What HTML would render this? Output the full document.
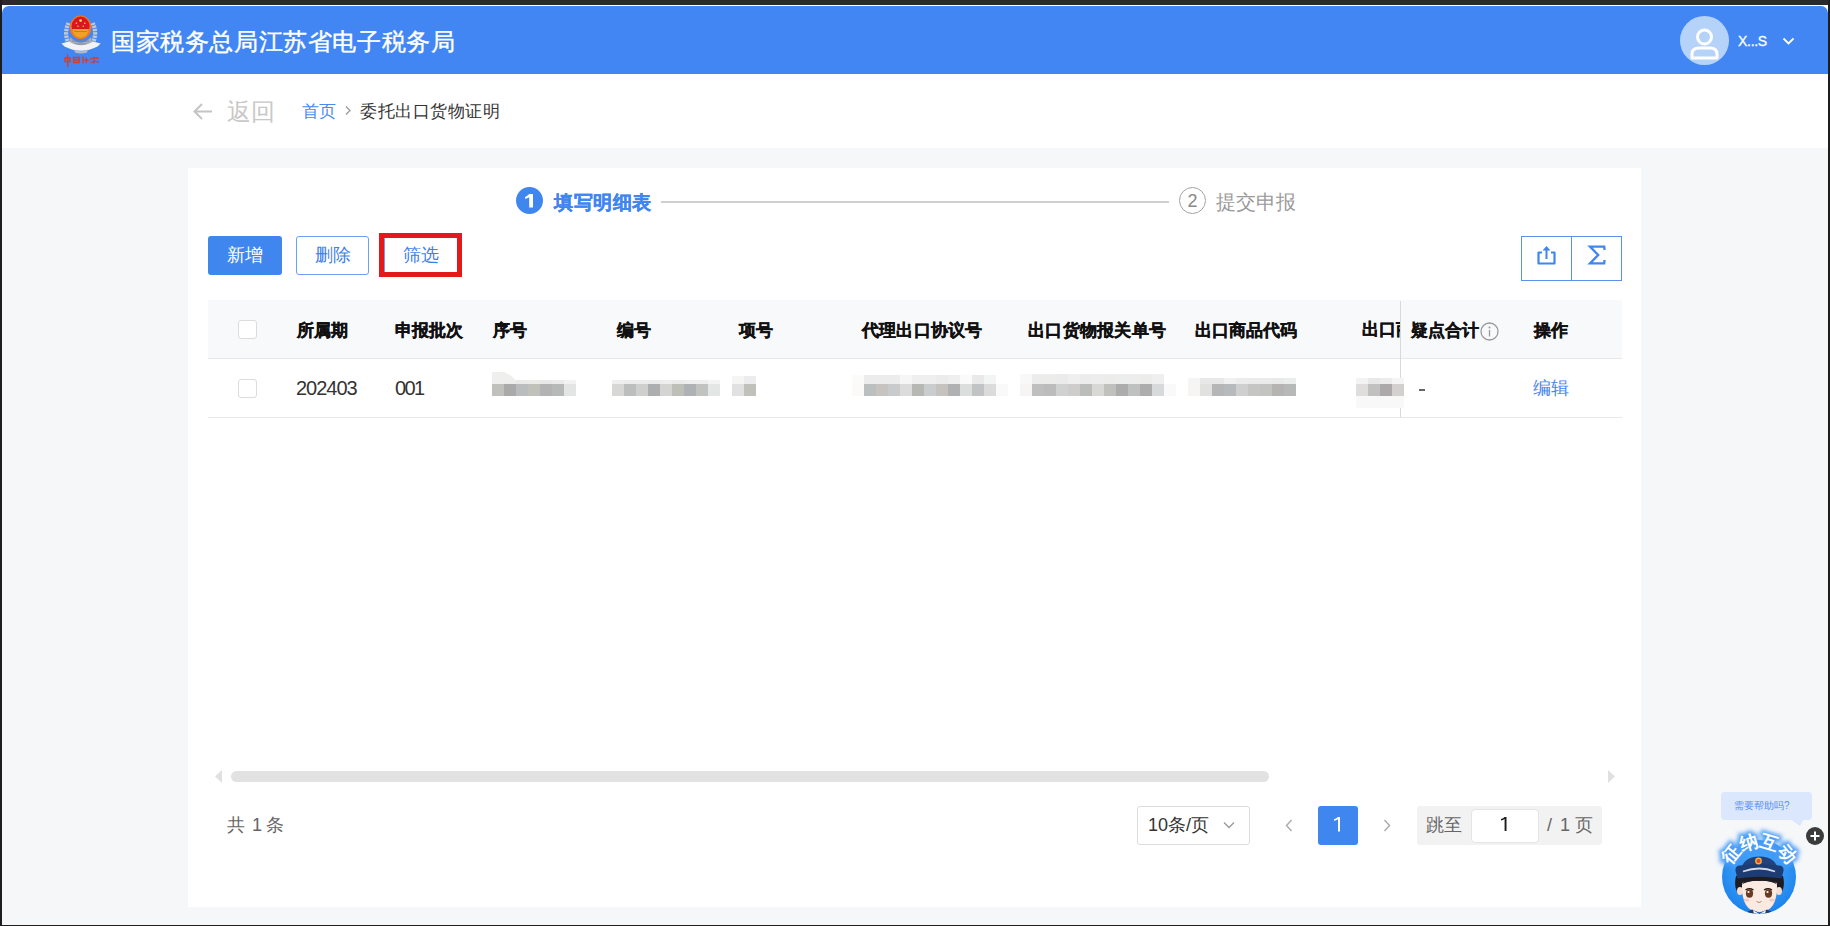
<!DOCTYPE html>
<html><head><meta charset="utf-8">
<style>
*{margin:0;padding:0;box-sizing:border-box}
html,body{width:1830px;height:926px;overflow:hidden;background:#f6f7f9}
body{font-family:"Liberation Sans",sans-serif;position:relative}
.a{position:absolute}
.t{position:absolute;white-space:nowrap;line-height:1}
.m{position:absolute;width:12px}
.th{position:absolute;top:322px;font-size:17px;font-weight:bold;color:#111;-webkit-text-stroke:0.35px #111;white-space:nowrap;line-height:1}
.cb{position:absolute;left:238px;width:19px;height:19px;border:1px solid #dcdcdc;border-radius:3px;background:#fff}
</style></head>
<body>
<!-- dark screen frame -->
<div class="a" style="left:0;top:0;width:1830px;height:5px;background:#2a2a2a"></div>
<div class="a" style="left:0;top:0;width:2px;height:926px;background:#1e1e1e"></div>
<div class="a" style="right:0;top:0;width:2px;height:926px;background:#1e1e1e"></div>
<div class="a" style="left:0;bottom:0;width:1830px;height:1px;background:#1e1e1e"></div>
<div class="a" style="left:2px;top:5px;width:1826px;height:1px;background:#fff"></div>
<div class="a" style="left:2px;top:5px;width:12px;height:12px;background:#fff"></div>
<div class="a" style="left:1816px;top:5px;width:12px;height:12px;background:#fff"></div>
<!-- header -->
<div class="a" style="left:2px;top:6px;width:1826px;height:68px;background:#4286f4;border-radius:7px 7px 0 0"></div>
<svg class="a" style="left:58px;top:12px" width="46" height="56" viewBox="0 0 46 56">
  <path d="M11 32 Q5.5 22 10.5 11 M34.2 32 Q39.7 22 34.7 11" fill="none" stroke="#c3c7cf" stroke-width="4.2" stroke-dasharray="2.4 0.9"/>
  <path d="M12 25 Q22.6 36 33.2 25 L34 31 Q22.6 40 11.2 31 Z" fill="#a9aeb8"/>
  <path d="M14 29 L31 29 M16 32 L29 32" stroke="#7f8591" stroke-width="0.8"/>
  <ellipse cx="22.6" cy="15.4" rx="10.8" ry="11.8" fill="#f07a1e"/>
  <ellipse cx="22.6" cy="14.2" rx="9" ry="9.6" fill="#dc1520"/>
  <path d="M14.2 17 L31 17 Q30.5 24.5 22.6 25.8 Q14.7 24.5 14.2 17 Z" fill="#f0a322"/>
  <path d="M16 19.5 L29.2 19.5" stroke="#d86a1a" stroke-width="0.8"/>
  <circle cx="22.6" cy="8.6" r="1.4" fill="#ffd95a"/><circle cx="18.4" cy="11.3" r="0.8" fill="#ffd95a"/><circle cx="26.8" cy="11.3" r="0.8" fill="#ffd95a"/><circle cx="20" cy="14.2" r="0.7" fill="#ffd95a"/><circle cx="25.2" cy="14.2" r="0.7" fill="#ffd95a"/>
  <path d="M3.5 31.5 L11 29.5 Q23 37 35 29.5 L42.7 31.5 L39.5 34.5 Q23 43 6.5 34.5 Z" fill="#f1f3f7"/>
  <path d="M16 37.5 Q23 41 30 37.5 L29 40.5 Q23 42.5 17 40.5 Z" fill="#b4bac4"/>
  <g fill="none" stroke="#d93a2c" stroke-width="1.4" stroke-linecap="round">
   <path d="M7 46 L12 46 L12 49.5 L7 49.5 Z M9.5 43 L9.8 54.5"/>
   <path d="M15.5 45.5 L21.5 45.5 L21 50.5 L15.8 50.5 Z M17 48 L20 48"/>
   <path d="M25 45 L25.2 51 M28 46 L28.4 50.5 M27 48 L30 48"/>
   <path d="M32.5 47 Q36 44.5 40 46.5 M33 50.5 Q36.5 48.5 40.5 50 M36.5 45.5 L36 51"/>
  </g>
</svg>
<div class="t" style="left:111px;top:30px;font-size:24px;letter-spacing:0.6px;-webkit-text-stroke:0.4px #fff;color:#fff">国家税务总局江苏省电子税务局</div>
<!-- avatar -->
<div class="a" style="left:1680px;top:16px;width:49px;height:49px;border-radius:50%;background:#b5d2f8"></div>
<svg class="a" style="left:1680px;top:16px" width="49" height="49" viewBox="0 0 49 49">
  <circle cx="24.5" cy="21" r="7" fill="none" stroke="#fff" stroke-width="3"/>
  <path d="M12 42 L12 38 Q12 32 19 32 L30 32 Q37 32 37 38 L37 42 Z" fill="none" stroke="#fff" stroke-width="3" stroke-linejoin="round"/>
</svg>
<div class="t" style="left:1738px;top:34px;font-size:14px;letter-spacing:-0.3px;-webkit-text-stroke:0.3px #fff;color:#fff">X...S</div>
<svg class="a" style="left:1782px;top:37px" width="13" height="9" viewBox="0 0 13 9"><path d="M1.5 1.5 L6.5 6.5 L11.5 1.5" fill="none" stroke="#fff" stroke-width="1.8"/></svg>
<!-- breadcrumb -->
<div class="a" style="left:2px;top:74px;width:1826px;height:74px;background:#fff"></div>
<svg class="a" style="left:192px;top:102px" width="22" height="19" viewBox="0 0 22 19"><path d="M20 9.5 L3 9.5 M10 2 L2.5 9.5 L10 17" fill="none" stroke="#c4c4c4" stroke-width="2"/></svg>
<div class="t" style="left:227px;top:101px;font-size:23.5px;color:#c8c8c8">返回</div>
<div class="t" style="left:302px;top:103px;font-size:17.4px;color:#4a8af0">首页</div>
<svg class="a" style="left:344px;top:105px" width="8" height="11" viewBox="0 0 8 11"><path d="M2 1.5 L6 5.5 L2 9.5" fill="none" stroke="#999" stroke-width="1.3"/></svg>
<div class="t" style="left:360px;top:103px;font-size:17.4px;letter-spacing:0.5px;color:#333">委托出口货物证明</div>
<!-- card -->
<div class="a" style="left:188px;top:168px;width:1453px;height:739px;background:#fff"></div>
<!-- steps -->
<div class="a" style="left:516px;top:187px;width:27px;height:27px;border-radius:50%;background:#3f86ee"></div>
<svg class="a" style="left:524.0px;top:193px" width="11.0" height="15.5" viewBox="0 0 11.0 15.5"><path d="M5.20 1.00 L9.00 1.00 L9.00 14.50 L5.20 14.50 L5.20 4.20 Q3.31 5.20 1.00 5.80 L1.00 4.20 Q3.94 2.60 5.20 1.00 Z" fill="#fff"/></svg>
<div class="t" style="left:554px;top:193px;font-size:19.4px;letter-spacing:0.5px;font-weight:bold;-webkit-text-stroke:0.3px #3f86ee;color:#3f86ee">填写明细表</div>
<div class="a" style="left:661px;top:201px;width:508px;height:2px;background:#d0d0d0"></div>
<div class="a" style="left:1179px;top:187px;width:27px;height:27px;border-radius:50%;border:1.6px solid #a2a2a2"></div>
<div class="t" style="left:1179px;top:192px;width:27px;text-align:center;font-size:18px;color:#888">2</div>
<div class="t" style="left:1216px;top:192px;font-size:20px;color:#9a9a9a">提交申报</div>
<!-- buttons -->
<div class="a" style="left:208px;top:236px;width:74px;height:39px;border-radius:3px;background:#3f86ee"></div>
<div class="t" style="left:227px;top:247px;font-size:17.5px;color:#fff">新增</div>
<div class="a" style="left:296px;top:236px;width:73px;height:39px;border-radius:3px;border:1px solid #6d9fef;background:#fff"></div>
<div class="t" style="left:315px;top:247px;font-size:17.5px;color:#3f7fe8">删除</div>
<div class="a" style="left:384px;top:236px;width:74px;height:39px;border-radius:3px;border:1px solid #6d9fef;background:#fff"></div>
<div class="t" style="left:403px;top:247px;font-size:17.5px;color:#3f7fe8">筛选</div>
<div class="a" style="left:379px;top:233px;width:83px;height:44px;border:5px solid #e31a1c"></div>
<!-- icon buttons -->
<div class="a" style="left:1521px;top:236px;width:101px;height:45px;border:1px solid #5c90ea"></div>
<div class="a" style="left:1571px;top:236px;width:1px;height:45px;background:#5c90ea"></div>
<svg class="a" style="left:1536px;top:244px" width="21" height="22" viewBox="0 0 21 22">
  <path d="M6 8.5 L2.5 8.5 L2.5 19.5 L18.5 19.5 L18.5 8.5 L15 8.5" fill="none" stroke="#3f86ee" stroke-width="2.2" stroke-linejoin="round"/>
  <path d="M10.5 15 L10.5 4" fill="none" stroke="#3f86ee" stroke-width="2"/>
  <path d="M6.5 6.5 L10.5 2 L14.5 6.5 Z" fill="#3f86ee"/>
</svg>
<svg class="a" style="left:1587px;top:244px" width="20" height="22" viewBox="0 0 20 22"><path d="M17.6 6 L17.2 2.6 L3 2.6 L11.2 11 L3 19.4 L17.2 19.4 L17.6 16" fill="none" stroke="#3f86ee" stroke-width="2.3" stroke-linejoin="miter"/></svg>
<!-- table header -->
<div class="a" style="left:208px;top:300px;width:1414px;height:58px;background:#f8f9fb"></div>
<div class="a" style="left:208px;top:358px;width:1414px;height:1px;background:#e8e8e8"></div>
<div class="a" style="left:208px;top:417px;width:1414px;height:1px;background:#e8e8e8"></div>
<div class="cb" style="top:320px"></div>
<div class="cb" style="top:379px"></div>
<div class="th" style="left:297px">所属期</div>
<div class="th" style="left:395px">申报批次</div>
<div class="th" style="left:493px">序号</div>
<div class="th" style="left:617px">编号</div>
<div class="th" style="left:739px">项号</div>
<div class="th" style="left:862px;letter-spacing:0.2px">代理出口协议号</div>
<div class="th" style="left:1028px;letter-spacing:0.25px">出口货物报关单号</div>
<div class="th" style="left:1195px">出口商品代码</div>
<div class="a" style="left:1340px;top:300px;width:60px;height:58px;overflow:hidden"><div class="th" style="left:22px;top:21px">出口商品名称</div></div>
<div class="th" style="left:1411px">疑点合计</div>
<svg class="a" style="left:1480px;top:322px" width="19" height="19" viewBox="0 0 19 19"><circle cx="9.5" cy="9.5" r="8.5" fill="none" stroke="#9a9a9a" stroke-width="1.3"/><circle cx="9.5" cy="5.5" r="1" fill="#9a9a9a"/><path d="M9.5 8 L9.5 14.5" stroke="#9a9a9a" stroke-width="1.3"/></svg>
<div class="th" style="left:1534px">操作</div>
<div class="a" style="left:1400px;top:301px;width:1px;height:116px;background:#d9d9d9"></div>
<!-- row -->
<div class="t" style="left:296px;top:378px;font-size:20px;letter-spacing:-1px;color:#333">202403</div>
<div class="t" style="left:395px;top:378px;font-size:20px;letter-spacing:-1.6px;color:#333">001</div>
<div class="a" style="left:1419px;top:389px;width:6px;height:2px;background:#666"></div>
<div class="t" style="left:1533px;top:380px;font-size:17.5px;color:#4a86e8">编辑</div>
<div class="m" style="left:492px;top:380px;height:4px;background:#efefef"></div>
<div class="m" style="left:492px;top:384px;height:12px;background:#c0c0bc"></div>
<div class="m" style="left:504px;top:380px;height:4px;background:#ededeb"></div>
<div class="m" style="left:504px;top:384px;height:12px;background:#aaaaaa"></div>
<div class="m" style="left:516px;top:380px;height:4px;background:#eaeae9"></div>
<div class="m" style="left:516px;top:384px;height:12px;background:#babdbd"></div>
<div class="m" style="left:528px;top:380px;height:4px;background:#ebebea"></div>
<div class="m" style="left:528px;top:384px;height:12px;background:#c1c1bc"></div>
<div class="m" style="left:540px;top:380px;height:4px;background:#e8e8e8"></div>
<div class="m" style="left:540px;top:384px;height:12px;background:#b3b3b3"></div>
<div class="m" style="left:552px;top:380px;height:4px;background:#ebebea"></div>
<div class="m" style="left:552px;top:384px;height:12px;background:#b7b9b9"></div>
<div class="m" style="left:564px;top:380px;height:4px;background:#f2f2f2"></div>
<div class="m" style="left:564px;top:384px;height:12px;background:#e3e5e4"></div>
<div class="m" style="left:612px;top:380px;height:4px;background:#efefef"></div>
<div class="m" style="left:612px;top:384px;height:12px;background:#d7d7d5"></div>
<div class="m" style="left:624px;top:380px;height:4px;background:#ececec"></div>
<div class="m" style="left:624px;top:384px;height:12px;background:#bcbebe"></div>
<div class="m" style="left:636px;top:380px;height:4px;background:#ececec"></div>
<div class="m" style="left:636px;top:384px;height:12px;background:#cfcfcd"></div>
<div class="m" style="left:648px;top:380px;height:4px;background:#ebebeb"></div>
<div class="m" style="left:648px;top:384px;height:12px;background:#adaeb0"></div>
<div class="m" style="left:660px;top:380px;height:4px;background:#eeeeee"></div>
<div class="m" style="left:660px;top:384px;height:12px;background:#d4d4d2"></div>
<div class="m" style="left:672px;top:380px;height:4px;background:#ebebeb"></div>
<div class="m" style="left:672px;top:384px;height:12px;background:#bfbfb9"></div>
<div class="m" style="left:684px;top:380px;height:4px;background:#edefee"></div>
<div class="m" style="left:684px;top:384px;height:12px;background:#afb2b4"></div>
<div class="m" style="left:696px;top:380px;height:4px;background:#eeeeee"></div>
<div class="m" style="left:696px;top:384px;height:12px;background:#c1c3c0"></div>
<div class="m" style="left:708px;top:380px;height:4px;background:#f4f4f4"></div>
<div class="m" style="left:708px;top:384px;height:12px;background:#e3e6e5"></div>
<div class="m" style="left:732px;top:376px;height:8px;background:#f5f5f3"></div>
<div class="m" style="left:732px;top:384px;height:12px;background:#e1e1e1"></div>
<div class="m" style="left:744px;top:376px;height:8px;background:#ececee"></div>
<div class="m" style="left:744px;top:384px;height:12px;background:#c1c1bc"></div>
<div class="m" style="left:852px;top:375px;height:9px;background:#fbfbfa"></div>
<div class="m" style="left:852px;top:384px;height:12px;background:#fbfaf9"></div>
<div class="m" style="left:864px;top:375px;height:9px;background:#ececec"></div>
<div class="m" style="left:864px;top:384px;height:12px;background:#bcbfbf"></div>
<div class="m" style="left:876px;top:375px;height:9px;background:#ececec"></div>
<div class="m" style="left:876px;top:384px;height:12px;background:#c6c3c1"></div>
<div class="m" style="left:888px;top:375px;height:9px;background:#ececec"></div>
<div class="m" style="left:888px;top:384px;height:12px;background:#c8cacc"></div>
<div class="m" style="left:900px;top:375px;height:9px;background:#f6f6f6"></div>
<div class="m" style="left:900px;top:384px;height:12px;background:#dddcdc"></div>
<div class="m" style="left:912px;top:375px;height:9px;background:#efefef"></div>
<div class="m" style="left:912px;top:384px;height:12px;background:#b7b8b4"></div>
<div class="m" style="left:924px;top:375px;height:9px;background:#efefef"></div>
<div class="m" style="left:924px;top:384px;height:12px;background:#c9cdce"></div>
<div class="m" style="left:936px;top:375px;height:9px;background:#ececec"></div>
<div class="m" style="left:936px;top:384px;height:12px;background:#c5c2bf"></div>
<div class="m" style="left:948px;top:375px;height:9px;background:#efefef"></div>
<div class="m" style="left:948px;top:384px;height:12px;background:#b0b1b3"></div>
<div class="m" style="left:960px;top:375px;height:9px;background:#fafafa"></div>
<div class="m" style="left:960px;top:384px;height:12px;background:#dcdedd"></div>
<div class="m" style="left:972px;top:375px;height:9px;background:#e9e9e9"></div>
<div class="m" style="left:972px;top:384px;height:12px;background:#c2c3c5"></div>
<div class="m" style="left:984px;top:375px;height:9px;background:#f3f5f4"></div>
<div class="m" style="left:984px;top:384px;height:12px;background:#dbdbdb"></div>
<div class="m" style="left:996px;top:375px;height:9px;background:#ffffff"></div>
<div class="m" style="left:996px;top:384px;height:12px;background:#f9f9f9"></div>
<div class="m" style="left:1020px;top:374px;height:10px;background:#f8f8f8"></div>
<div class="m" style="left:1020px;top:384px;height:12px;background:#f6f5f3"></div>
<div class="m" style="left:1032px;top:374px;height:10px;background:#ececec"></div>
<div class="m" style="left:1032px;top:384px;height:12px;background:#bfbfbf"></div>
<div class="m" style="left:1044px;top:374px;height:10px;background:#ececea"></div>
<div class="m" style="left:1044px;top:384px;height:12px;background:#bcbcbc"></div>
<div class="m" style="left:1056px;top:374px;height:10px;background:#ebebeb"></div>
<div class="m" style="left:1056px;top:384px;height:12px;background:#d0d2d1"></div>
<div class="m" style="left:1068px;top:374px;height:10px;background:#efefef"></div>
<div class="m" style="left:1068px;top:384px;height:12px;background:#cfcdcb"></div>
<div class="m" style="left:1080px;top:374px;height:10px;background:#ececec"></div>
<div class="m" style="left:1080px;top:384px;height:12px;background:#bbbdba"></div>
<div class="m" style="left:1092px;top:374px;height:10px;background:#ededed"></div>
<div class="m" style="left:1092px;top:384px;height:12px;background:#d8d8d7"></div>
<div class="m" style="left:1104px;top:374px;height:10px;background:#ececea"></div>
<div class="m" style="left:1104px;top:384px;height:12px;background:#c0c1bc"></div>
<div class="m" style="left:1116px;top:374px;height:10px;background:#eceeee"></div>
<div class="m" style="left:1116px;top:384px;height:12px;background:#acacac"></div>
<div class="m" style="left:1128px;top:374px;height:10px;background:#ededed"></div>
<div class="m" style="left:1128px;top:384px;height:12px;background:#bfc1c1"></div>
<div class="m" style="left:1140px;top:374px;height:10px;background:#ececea"></div>
<div class="m" style="left:1140px;top:384px;height:12px;background:#adadad"></div>
<div class="m" style="left:1152px;top:374px;height:10px;background:#efefef"></div>
<div class="m" style="left:1152px;top:384px;height:12px;background:#d6dadb"></div>
<div class="m" style="left:1164px;top:374px;height:10px;background:#ffffff"></div>
<div class="m" style="left:1164px;top:384px;height:12px;background:#f9f9f9"></div>
<div class="m" style="left:1188px;top:378px;height:6px;background:#f5f5f5"></div>
<div class="m" style="left:1188px;top:384px;height:12px;background:#f6f5f3"></div>
<div class="m" style="left:1200px;top:378px;height:6px;background:#e8e8e8"></div>
<div class="m" style="left:1200px;top:384px;height:12px;background:#e1e1e0"></div>
<div class="m" style="left:1212px;top:378px;height:6px;background:#e8e8e8"></div>
<div class="m" style="left:1212px;top:384px;height:12px;background:#b5b6b8"></div>
<div class="m" style="left:1224px;top:378px;height:6px;background:#f1f1f1"></div>
<div class="m" style="left:1224px;top:384px;height:12px;background:#b6babc"></div>
<div class="m" style="left:1236px;top:378px;height:6px;background:#ececec"></div>
<div class="m" style="left:1236px;top:384px;height:12px;background:#cfcfcf"></div>
<div class="m" style="left:1248px;top:378px;height:6px;background:#ebebeb"></div>
<div class="m" style="left:1248px;top:384px;height:12px;background:#c5c5c3"></div>
<div class="m" style="left:1260px;top:378px;height:6px;background:#ebebeb"></div>
<div class="m" style="left:1260px;top:384px;height:12px;background:#c3c3c1"></div>
<div class="m" style="left:1272px;top:378px;height:6px;background:#e9e9e9"></div>
<div class="m" style="left:1272px;top:384px;height:12px;background:#b5b4b2"></div>
<div class="m" style="left:1284px;top:378px;height:6px;background:#ebedec"></div>
<div class="m" style="left:1284px;top:384px;height:12px;background:#b7b8b8"></div>
<div class="m" style="left:1356px;top:378px;height:6px;background:#f3f3f3"></div>
<div class="m" style="left:1356px;top:384px;height:12px;background:#dfdedc"></div>
<div class="m" style="left:1368px;top:378px;height:6px;background:#e8e8e8"></div>
<div class="m" style="left:1368px;top:384px;height:12px;background:#c1c2c0"></div>
<div class="m" style="left:1380px;top:378px;height:6px;background:#ececec"></div>
<div class="m" style="left:1380px;top:384px;height:12px;background:#ada9aa"></div>
<div class="m" style="left:1392px;top:378px;height:6px;background:#f5f5f5"></div>
<div class="m" style="left:1392px;top:384px;height:12px;background:#d4d0cf"></div>

<div class="a" style="left:1356px;top:396px;width:48px;height:12px;background:#f8f8f8"></div>
<svg class="a" style="left:492px;top:371px" width="30" height="10" viewBox="0 0 30 10"><path d="M0 1 L12 1 L18 4 L24 9 L24 10 L0 10 Z" fill="#efefee"/></svg>
<!-- scrollbar -->
<svg class="a" style="left:214px;top:769px" width="9" height="15" viewBox="0 0 9 15"><path d="M1 7.5 L8 1 L8 14 Z" fill="#e0e0e0"/></svg>
<div class="a" style="left:231px;top:771px;width:1038px;height:11px;border-radius:6px;background:#e2e2e2"></div>
<svg class="a" style="left:1607px;top:769px" width="9" height="15" viewBox="0 0 9 15"><path d="M8 7.5 L1 1 L1 14 Z" fill="#e0e0e0"/></svg>
<!-- pagination -->
<div class="t" style="left:227px;top:816px;font-size:18px;color:#666">共</div><div class="t" style="left:252px;top:816px;font-size:18px;color:#666">1</div><div class="t" style="left:266px;top:816px;font-size:18px;color:#666">条</div>
<div class="a" style="left:1137px;top:806px;width:113px;height:39px;border:1px solid #dcdcdc;border-radius:3px;background:#fff"></div>
<div class="t" style="left:1148px;top:816px;font-size:18px;color:#333">10条/页</div>
<svg class="a" style="left:1222px;top:820px" width="14" height="10" viewBox="0 0 14 10"><path d="M2 2.5 L7 7.5 L12 2.5" fill="none" stroke="#999" stroke-width="1.3"/></svg>
<svg class="a" style="left:1284px;top:818px" width="10" height="15" viewBox="0 0 10 15"><path d="M7.5 2 L2.5 7.5 L7.5 13" fill="none" stroke="#aaa" stroke-width="1.4"/></svg>
<div class="a" style="left:1318px;top:806px;width:40px;height:39px;border-radius:3px;background:#3f86ee"></div>
<svg class="a" style="left:1333.2px;top:816px" width="9.0" height="16.600000000000023" viewBox="0 0 9.0 16.600000000000023"><path d="M5.00 1.00 L7.00 1.00 L7.00 15.60 L5.00 15.60 L5.00 3.20 Q3.20 4.20 1.00 4.80 L1.00 3.20 Q3.80 2.60 5.00 1.00 Z" fill="#fff"/></svg>
<svg class="a" style="left:1382px;top:818px" width="10" height="15" viewBox="0 0 10 15"><path d="M2.5 2 L7.5 7.5 L2.5 13" fill="none" stroke="#aaa" stroke-width="1.4"/></svg>
<div class="a" style="left:1417px;top:806px;width:185px;height:39px;border-radius:3px;background:#f2f2f2"></div>
<div class="t" style="left:1426px;top:817px;font-size:17.5px;color:#666">跳至</div>
<div class="a" style="left:1471px;top:809px;width:68px;height:34px;border:1px solid #e4e4e4;border-radius:4px;background:#fff"></div>
<svg class="a" style="left:1499.9px;top:816.2px" width="8.5" height="16.0" viewBox="0 0 8.5 16.0"><path d="M4.60 1.00 L6.50 1.00 L6.50 15.00 L4.60 15.00 L4.60 3.00 Q2.98 4.00 1.00 4.60 L1.00 3.00 Q3.52 2.60 4.60 1.00 Z" fill="#1a1a1a"/></svg>
<div class="t" style="left:1547px;top:816px;font-size:18px;color:#666">/</div><div class="t" style="left:1560px;top:816px;font-size:18px;color:#666">1</div><div class="t" style="left:1575px;top:816px;font-size:18px;color:#666">页</div>
<!-- help widget -->
<div class="a" style="left:1721px;top:792px;width:91px;height:28px;border-radius:4px;background:#dae7fc"></div>
<svg class="a" style="left:1790px;top:819px" width="14" height="8" viewBox="0 0 14 8"><path d="M0 0 L14 0 L10 7 Z" fill="#dae7fc"/></svg>
<div class="t" style="left:1734px;top:801px;font-size:10px;color:#5a8ef0">需要帮助吗?</div>
<div class="a" style="left:1806px;top:827px;width:18px;height:18px;border-radius:50%;background:#3b3b3b"></div>
<svg class="a" style="left:1806px;top:827px" width="18" height="18" viewBox="0 0 18 18"><path d="M9 4.5 L9 13.5 M4.5 9 L13.5 9" stroke="#fff" stroke-width="2"/></svg>
<svg class="a" style="left:1712px;top:826px" width="96" height="92" viewBox="0 0 96 92">
  <defs><radialGradient id="g" cx="50%" cy="40%" r="60%"><stop offset="0" stop-color="#4fb0ff"/><stop offset="1" stop-color="#1c82ec"/></radialGradient>
  <filter id="glow" x="-30%" y="-30%" width="160%" height="160%"><feGaussianBlur stdDeviation="2"/></filter>
  <path id="arc" d="M17 51 A30 30 0 0 1 77 51"/><clipPath id="cc"><circle cx="47" cy="51" r="37"/></clipPath></defs>
  <circle cx="47" cy="51" r="37" fill="url(#g)"/>
  <text font-size="18" font-weight="bold" fill="#4a9cf8" stroke="#4a9cf8" stroke-width="5" filter="url(#glow)" letter-spacing="-0.3"><textPath href="#arc" startOffset="50%" text-anchor="middle">征纳互动</textPath></text>
  <text font-size="18" font-weight="bold" fill="#fff" letter-spacing="-0.3"><textPath href="#arc" startOffset="50%" text-anchor="middle">征纳互动</textPath></text>
  <path d="M24 50 Q21 63 28 69 L31 57 Q47.5 53 64 57 L67 69 Q74 63 71 50 Z" fill="#1f1b22"/>
  <ellipse cx="28" cy="65" rx="3" ry="4" fill="#f6ddd2"/><ellipse cx="67" cy="65" rx="3" ry="4" fill="#f6ddd2"/>
  <path d="M30 57 Q29 86 47.5 86 Q66 86 65 57 Q47.5 52 30 57 Z" fill="#fbeae2"/>
  <path d="M29 59 Q38 50 47.5 51 Q57 50 66 59 Q57 54 47.5 55 Q38 54 29 59 Z" fill="#1f1b22"/>
  <path d="M29 45 Q30 31 47.5 30.5 Q65 31 66 45 Z" fill="#22427f"/>
  <path d="M23.5 45 Q23 39.5 28 39.5 Q47.5 36.5 67 39.5 Q72 39.5 71.5 45 L69.5 52.5 Q47.5 49 25.5 52.5 Z" fill="#1e3c74"/>
  <path d="M31 45.5 Q47.5 39.5 63 45.5" stroke="#d3d9e5" stroke-width="1.8" fill="none"/>
  <circle cx="46.5" cy="35" r="3.4" fill="#efb63e"/><circle cx="46.5" cy="35" r="2.1" fill="#e2472c"/>
  <path d="M33.5 64 Q37.5 61.5 41.5 64" stroke="#2a1a14" stroke-width="1.3" fill="none"/><path d="M52 64 Q56 61.5 60 64" stroke="#2a1a14" stroke-width="1.3" fill="none"/>
  <ellipse cx="37.5" cy="67.5" rx="3.6" ry="4.2" fill="#6a3a24"/><ellipse cx="56.5" cy="67.5" rx="3.6" ry="4.2" fill="#6a3a24"/>
  <circle cx="36.5" cy="66" r="1.1" fill="#fff"/><circle cx="55.5" cy="66" r="1.1" fill="#fff"/>
  <ellipse cx="34.5" cy="74" rx="2.8" ry="1.6" fill="#f8c6bb"/><ellipse cx="60" cy="74" rx="2.8" ry="1.6" fill="#f8c6bb"/>
  <path d="M44.5 75.5 Q47 77.5 49.5 75.5" stroke="#b8786a" stroke-width="0.9" fill="none"/>
  <path clip-path="url(#cc)" d="M30 88.5 L40 83.5 L47.5 87 L55 83.5 L65 88.5 L65 92 L30 92 Z" fill="#203f7a"/>
  <path clip-path="url(#cc)" d="M41 84 L47.5 88 L54 84 L52 92 L43 92 Z" fill="#e9eef6"/>
</svg>
</body></html>
